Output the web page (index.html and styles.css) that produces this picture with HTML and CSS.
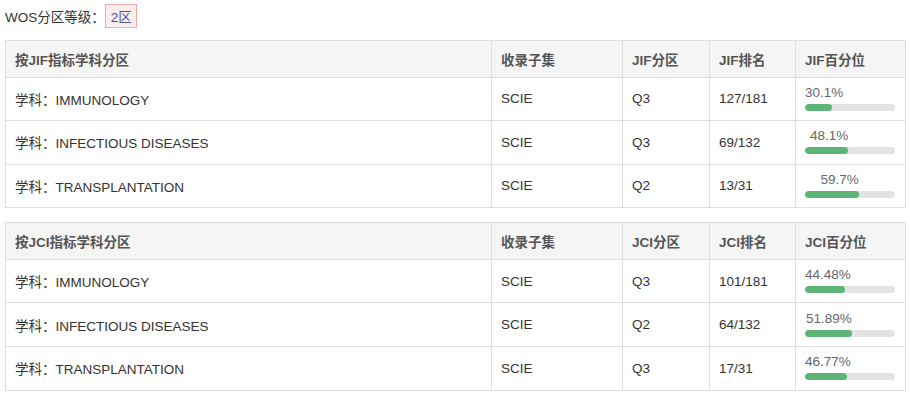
FILE: index.html
```html
<!DOCTYPE html>
<html lang="zh">
<head>
<meta charset="utf-8">
<link rel="stylesheet" href="styles.css">
</head>
<body>
<div class="page">
  <div class="level">
    <span class="level-label">WOS分区等级：</span>
    <span class="badge">2区</span>
  </div>

  <table class="zone-table">
    <colgroup>
      <col class="c1"><col class="c2"><col class="c3"><col class="c4"><col class="c5">
    </colgroup>
    <thead>
      <tr><th>按JIF指标学科分区</th><th>收录子集</th><th>JIF分区</th><th>JIF排名</th><th>JIF百分位</th></tr>
    </thead>
    <tbody>
      <tr>
        <td>学科：IMMUNOLOGY</td><td>SCIE</td><td>Q3</td><td>127/181</td>
        <td><div class="pct"><div class="pct-label" style="width:30.1%">30.1%</div><div class="track"><div class="fill" style="width:30.1%"></div></div></div></td>
      </tr>
      <tr>
        <td>学科：INFECTIOUS DISEASES</td><td>SCIE</td><td>Q3</td><td>69/132</td>
        <td><div class="pct"><div class="pct-label" style="width:48.1%">48.1%</div><div class="track"><div class="fill" style="width:48.1%"></div></div></div></td>
      </tr>
      <tr>
        <td>学科：TRANSPLANTATION</td><td>SCIE</td><td>Q2</td><td>13/31</td>
        <td><div class="pct"><div class="pct-label" style="width:59.7%">59.7%</div><div class="track"><div class="fill" style="width:59.7%"></div></div></div></td>
      </tr>
    </tbody>
  </table>

  <table class="zone-table">
    <colgroup>
      <col class="c1"><col class="c2"><col class="c3"><col class="c4"><col class="c5">
    </colgroup>
    <thead>
      <tr><th>按JCI指标学科分区</th><th>收录子集</th><th>JCI分区</th><th>JCI排名</th><th>JCI百分位</th></tr>
    </thead>
    <tbody>
      <tr>
        <td>学科：IMMUNOLOGY</td><td>SCIE</td><td>Q3</td><td>101/181</td>
        <td><div class="pct"><div class="pct-label" style="width:44.48%">44.48%</div><div class="track"><div class="fill" style="width:44.48%"></div></div></div></td>
      </tr>
      <tr>
        <td>学科：INFECTIOUS DISEASES</td><td>SCIE</td><td>Q2</td><td>64/132</td>
        <td><div class="pct"><div class="pct-label" style="width:51.89%">51.89%</div><div class="track"><div class="fill" style="width:51.89%"></div></div></div></td>
      </tr>
      <tr>
        <td>学科：TRANSPLANTATION</td><td>SCIE</td><td>Q3</td><td>17/31</td>
        <td><div class="pct"><div class="pct-label" style="width:46.77%">46.77%</div><div class="track"><div class="fill" style="width:46.77%"></div></div></div></td>
      </tr>
    </tbody>
  </table>
</div>
</body>
</html>
```

FILE: styles.css
```css
html, body {
  margin: 0;
  padding: 0;
  background: #fff;
}
body {
  font-family: "Liberation Sans", Arial, "Noto Sans CJK SC", sans-serif;
  font-size: 13.5px;
  color: #333;
}
.page {
  padding: 4px 5px 5px 5px;
}
.level {
  display: flex;
  align-items: center;
  height: 24px;
  margin-bottom: 12px;
}
.level-label {
  color: #333;
}
.badge {
  display: inline-flex;
  align-items: center;
  box-sizing: border-box;
  height: 24px;
  padding: 0 4px 0 5px;
  border: 1px solid #f7a9a9;
  background: #fdeded;
  color: #3c5a9a;
}
.zone-table {
  width: 900px;
  border-collapse: collapse;
  table-layout: fixed;
  margin-bottom: 14px;
}
.zone-table col.c1 { width: 486px; }
.zone-table col.c2 { width: 131px; }
.zone-table col.c3 { width: 87px; }
.zone-table col.c4 { width: 86px; }
.zone-table col.c5 { width: 110px; }
.zone-table th,
.zone-table td {
  border: 1px solid #dedede;
  padding: 0 9px;
  text-align: left;
  white-space: nowrap;
}
.zone-table th {
  height: 35.5px;
  background: #f5f5f5;
  color: #555;
  font-weight: bold;
}
.zone-table td {
  height: 42.6px;
}
.pct {
  width: 90px;
  padding-bottom: 3px;
}
.pct-label {
  text-align: right;
  color: #666;
  white-space: nowrap;
  line-height: 17px;
  margin-bottom: 3px;
}
.track {
  width: 90px;
  height: 7px;
  border-radius: 4px;
  background: #e3e3e3;
  overflow: hidden;
}
.fill {
  height: 100%;
  border-radius: 4px;
  background: #5cb574;
}
```
